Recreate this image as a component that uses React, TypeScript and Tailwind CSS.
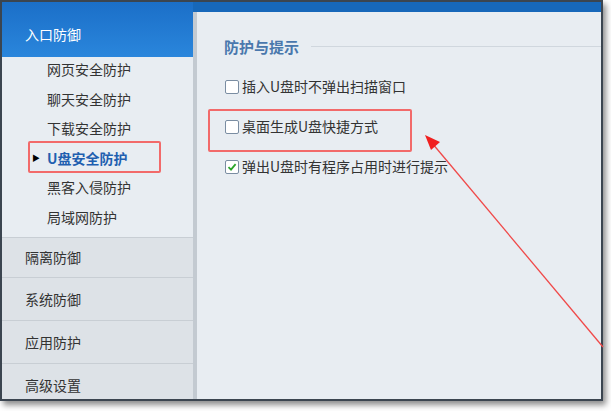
const subItems = ["网页安全防护", "聊天安全防护", "下载安全防护", "U盘安全防护", "黑客入侵防护", "局域网防护"];
const groups = [
  { label: "隔离防御", h: "h-[40px]" },
  { label: "系统防御", h: "h-[43px]" },
  { label: "应用防护", h: "h-[43px]" },
  { label: "高级设置", h: "h-[36px] pt-[8px]" },
];

const font = { fontFamily: '"Noto Sans CJK SC", "Noto Sans", sans-serif' };

const Box = ({ checked }: { checked?: boolean }) => (
  <span className="w-[14px] h-[14px] border border-[#7a8da2] bg-white rounded-[2px] flex items-center justify-center shrink-0">
    {checked && (
      <svg width="10" height="10" viewBox="0 0 10 10">
        <path d="M1.5 5.2 L4 7.6 L8.6 2.2" fill="none" stroke="#2aa52a" strokeWidth="1.8" />
      </svg>
    )}
  </span>
);

const App = () => {
  return (
    <div className="w-[611px] h-[411px] bg-white relative" style={font}>
      <div className="w-[603px] h-[401px] flex border-t-2 border-l-2 border-r-2 border-b-2 border-[#3b4550] shadow-[3px_4px_6px_rgba(0,0,0,0.45)] overflow-hidden">
        <div className="w-[191px] flex flex-col bg-[#e8edf2] shrink-0">
          <div className="h-[55px] bg-gradient-to-b from-[#1b6fc8] to-[#2a86dc] text-white text-[14px] flex items-center pl-[23px] pt-[10px] shrink-0">
            入口防御
          </div>
          <div className="relative h-[180px] shrink-0">
            <div className="-mt-[2px]">
              {subItems.map((s, i) => (
                <div key={i} className={`h-[29.5px] flex items-center text-[14px] pl-[45px] relative ${i === 3 ? "text-[#1f5fb0] font-bold" : "text-[#333]"}`}>
                  {i === 3 && <span className="absolute left-[30px] text-[8px] text-black">▶</span>}
                  {s}
                </div>
              ))}
            </div>
            <div className="absolute left-[26px] top-[84px] w-[133px] h-[32px] border-2 border-[#f26a6a] rounded-[2px]" />
          </div>
          {groups.map((g) => (
            <div key={g.label} className={`${g.h} shrink-0 bg-[#dde2e7] border-t border-[#c8ced4] flex items-center pl-[23px] text-[14px] text-[#333]`}>
              {g.label}
            </div>
          ))}
        </div>
        <div className="flex-1 flex flex-col">
          <div className="h-[10px] bg-[#1768ba] shrink-0" />
          <div className="flex-1 bg-[#e8edf2] border-l-[4px] border-[#c3cad1] relative">
            <div className="flex items-center mt-[24px] ml-[27px]">
              <span className="text-[15px] font-bold text-[#4a78ad]">防护与提示</span>
              <div className="flex-1 h-px bg-[#d0d7de] ml-[12px] mt-[-2px]" />
            </div>
            <div className="flex flex-col ml-[28px] mt-[21px] gap-[26px] text-[14px] text-[#333]">
              <label className="flex items-center gap-[3px] h-[14px]"><Box />插入U盘时不弹出扫描窗口</label>
              <label className="flex items-center gap-[3px] h-[14px]"><Box />桌面生成U盘快捷方式</label>
              <label className="flex items-center gap-[3px] h-[14px]"><Box checked />弹出U盘时有程序占用时进行提示</label>
            </div>
            <div className="absolute left-[11px] top-[97px] w-[204px] h-[43px] border-2 border-[#f26a6a] rounded-[2px]" />
          </div>
        </div>
      </div>
      <svg className="absolute left-0 top-0 pointer-events-none" width="611" height="411">
        <line x1="603" y1="347" x2="432" y2="143" stroke="#f04848" strokeWidth="1.3" />
        <polygon points="425,135 440,142 431,150" fill="#f02020" />
      </svg>
    </div>
  );
};

export default App;
